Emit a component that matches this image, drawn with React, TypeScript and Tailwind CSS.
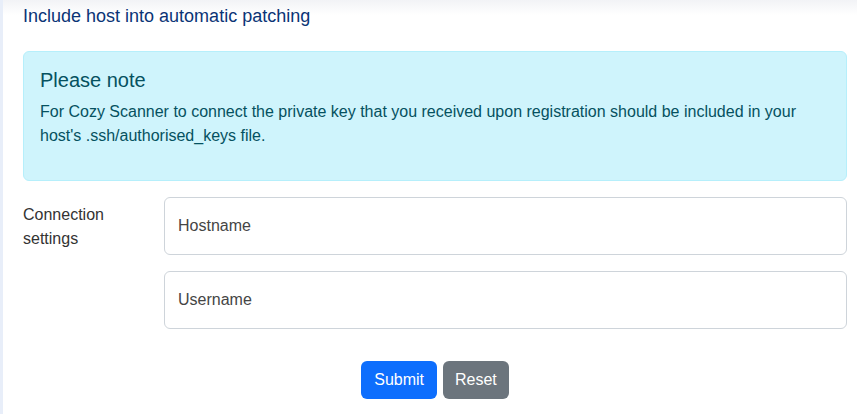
import React from 'react';

const font = { fontFamily: '"Liberation Sans", Arial, sans-serif' };

function Field({ placeholder }: { placeholder: string }) {
  return (
    <input
      type="text"
      placeholder={placeholder}
      className="block h-[58px] w-full rounded-[6px] border border-[#ced4da] bg-white px-[13px] text-[16px] text-[#212529] placeholder:text-[#454545] outline-none"
    />
  );
}

export default function App() {
  return (
    <div className="flex h-[414px] w-[857px] overflow-hidden bg-white" style={font}>
      {/* sidebar edge */}
      <div className="w-[3px] shrink-0 bg-[#e8eef9]" />

      <div className="flex-1 bg-[linear-gradient(to_bottom,#f2f3f6,#ffffff_15px)] pl-[20px] pr-[10px]">
        <h1 className="pt-[4px] text-[18px] leading-[24px] text-[#0b3476]">Include host into automatic patching</h1>

        <div className="mt-[23px] rounded-[6px] border border-[#b6effb] bg-[#cff4fc] p-[16px] text-[#055160]">
          <h5 className="mb-[8px] text-[20px] leading-[24px]">Please note</h5>
          <p className="mb-[16px] text-[16px] leading-[24px]">
            For Cozy Scanner to connect the private key that you received upon registration should be included in your
            host's .ssh/authorised_keys file.
          </p>
        </div>

        <div className="mt-[16px] flex">
          <label className="w-[141px] shrink-0 pt-[6px] text-[16px] leading-[24px] text-[#333]">
            Connection
            <br />
            settings
          </label>
          <div className="flex flex-1 flex-col gap-[16px]">
            <Field placeholder="Hostname" />
            <Field placeholder="Username" />
          </div>
        </div>

        <div className="mt-[32px] flex justify-center gap-[6px]">
          <button className="h-[38px] rounded-[6px] bg-[#0d6efd] px-[13px] text-[16px] text-white">Submit</button>
          <button className="h-[38px] rounded-[6px] bg-[#6c757d] px-[12px] text-[16px] text-white">Reset</button>
        </div>
      </div>
    </div>
  );
}
